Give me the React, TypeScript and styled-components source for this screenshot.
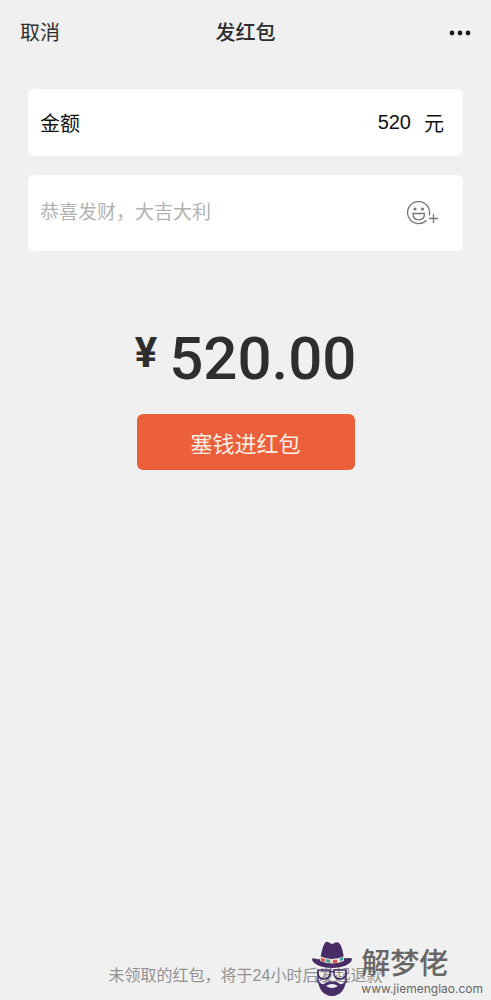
import React, { useState } from "react";
import styled, { createGlobalStyle } from "styled-components";

const GlobalStyle = createGlobalStyle`
  * { box-sizing: border-box; }
  body {
    margin: 0;
    background: #f0f0f0;
    color: #2e2e2e;
    font-family: "Liberation Sans", "Noto Sans CJK SC", sans-serif;
  }
  button, input { font-family: inherit; }
`;

const Page = styled.div`
  position: relative;
  display: flex;
  flex-direction: column;
  min-height: 100vh;
`;

const Header = styled.header`
  display: grid;
  grid-template-columns: 1fr auto 1fr;
  align-items: center;
  height: 65px;
  padding: 0 20px;
`;

const Title = styled.h1`
  margin: 0;
  font-size: 20px;
  line-height: 30px;
  font-weight: 500;
`;

const PlainButton = styled.button<{ $end?: boolean }>`
  display: flex;
  justify-self: ${(p) => (p.$end ? "end" : "start")};
  padding: 0;
  border: 0;
  background: none;
  color: inherit;
  font-size: 20px;
  line-height: 30px;
  cursor: pointer;
`;

const Form = styled.form`
  display: flex;
  flex-direction: column;
  padding: 24px 28px 0;
`;

const Field = styled.div<{ $tall?: boolean }>`
  display: flex;
  align-items: center;
  height: ${(p) => (p.$tall ? 76 : 67)}px;
  margin-bottom: 19px;
  padding: 0 ${(p) => (p.$tall ? 24 : 19)}px 0 12px;
  border-radius: 6px;
  background: #fff;
  color: #111;
  font-size: 20px;
`;

const TextInput = styled.input<{ $amount?: boolean }>`
  flex: 1;
  min-width: 0;
  height: 40px;
  padding: 0;
  border: 0;
  outline: 0;
  background: none;
  color: inherit;
  font-size: ${(p) => (p.$amount ? 20 : 19)}px;
  text-align: ${(p) => (p.$amount ? "right" : "left")};
  margin-right: ${(p) => (p.$amount ? 13 : 0)}px;
  &::placeholder { color: #b2b2b2; opacity: 1; }
`;

const Total = styled.output`
  display: flex;
  justify-content: center;
  align-items: flex-start;
  gap: 12px;
  margin-top: 54px;
  font-family: Roboto, sans-serif;
  font-weight: 500;
  font-size: 60px;
  line-height: 70px;
`;

const Currency = styled.span`
  font-size: 42px;
  line-height: 58px;
  font-weight: 700;
`;

const Submit = styled.button`
  align-self: center;
  width: 218px;
  height: 56px;
  margin-top: 20px;
  padding: 0;
  border: 0;
  border-radius: 6px;
  background: #eb5f3b;
  color: #fdeee6;
  font-size: 22px;
  cursor: pointer;
`;

const Footer = styled.footer`
  margin-top: auto;
  padding-bottom: 12px;
  color: #929292;
  font-size: 16px;
  line-height: 24px;
  text-align: center;
`;

const Watermark = styled.div`
  position: absolute;
  right: 8px;
  bottom: 3px;
  display: flex;
  align-items: flex-end;
  gap: 8px;
  color: #666;
  pointer-events: none;
`;

const Brand = styled.div`
  display: flex;
  flex-direction: column;
`;

const BrandName = styled.span`
  font-size: 29px;
  line-height: 34px;
  font-weight: 500;
`;

const BrandUrl = styled.span`
  font-family: Inter, sans-serif;
  font-size: 12px;
  line-height: 16px;
`;

const MoreIcon = () => (
  <svg width="22" height="6" viewBox="0 0 22 6" fill="#1c1c1c" aria-hidden="true">
    <circle cx="3" cy="3" r="2.4" />
    <circle cx="11" cy="3" r="2.4" />
    <circle cx="19" cy="3" r="2.4" />
  </svg>
);

const EmojiIcon = () => (
  <svg width="32" height="26" viewBox="0 0 32 26" fill="none" stroke="#777" strokeWidth="1.3" aria-hidden="true">
    <path d="M22.2 15.5A11 11 0 1 0 19.5 20.2" />
    <path d="M6 13.5h11.500c0 4-2.500 6.300-5.800 6.300S6 17.500 6 13.500z" />
    <circle cx="8" cy="9" r="1.600" fill="#777" stroke="none" />
    <circle cx="15.500" cy="9" r="1.600" fill="#777" stroke="none" />
    <path d="M26.500 14v9M22 18.500h9" />
  </svg>
);

const HatLogo = () => (
  <svg width="42" height="56" viewBox="0 0 42 56" aria-hidden="true">
    <path d="M9 18C11 10 12 3 15 1c2-1 4 2 6 2s4-3 7-1c3 3 4 9 5 15 3 1 7-1 8 1 0 5-10 9-20 9S1 23 1 18c1-2 5 1 8 0z" fill="#472c66" />
    <path d="M9 15q12 6 24 0v5q-12 5-24 0z" fill="#e8d9cf" />
    <path d="M10 17l4 1v3l-4-1zM22 19h4v3h-4z" fill="#d9534f" />
    <path d="M15 18l4 1v3l-4-1zM29 17l3-1v3l-3 1z" fill="#3aa6a0" />
    <g fill="none" stroke="#472c66" strokeWidth="1.500">
      <path d="M7 29h12v4q-1 5-6 5t-6-5zM23 29h12v4q-1 5-6 5t-6-5zM19 31q2-1 4 0" />
      <path d="M7 30v12M35 30v12" />
    </g>
    <path d="M7 38q2 6 6 5 5-4 8-2 3-2 8 2 4 1 6-5c0 9-5 17-14 17S7 47 7 38z" fill="#472c66" />
    <path d="M15 45q6-4 12 0-6 4-12 0z" fill="#f0f0f0" />
  </svg>
);

export default function App() {
  const [amount, setAmount] = useState("520");
  const [message, setMessage] = useState("");
  return (
    <>
      <GlobalStyle />
      <Page>
        <Header>
          <PlainButton type="button">取消</PlainButton>
          <Title>发红包</Title>
          <PlainButton type="button" $end aria-label="更多">
            <MoreIcon />
          </PlainButton>
        </Header>
        <Form onSubmit={(e) => e.preventDefault()}>
          <Field>
            <label htmlFor="amount">金额</label>
            <TextInput
              id="amount"
              $amount
              inputMode="decimal"
              value={amount}
              onChange={(e) => setAmount(e.target.value)}
            />
            <span>元</span>
          </Field>
          <Field $tall>
            <TextInput
              aria-label="祝福语"
              placeholder="恭喜发财，大吉大利"
              value={message}
              onChange={(e) => setMessage(e.target.value)}
            />
            <PlainButton type="button" aria-label="添加表情">
              <EmojiIcon />
            </PlainButton>
          </Field>
          <Total htmlFor="amount">
            <Currency>¥</Currency>
            <span>{(Number(amount) || 0).toFixed(2)}</span>
          </Total>
          <Submit type="submit">塞钱进红包</Submit>
        </Form>
        <Footer>未领取的红包，将于24小时后发起退款</Footer>
        <Watermark>
          <HatLogo />
          <Brand>
            <BrandName>解梦佬</BrandName>
            <BrandUrl>www.jiemenglao.com</BrandUrl>
          </Brand>
        </Watermark>
      </Page>
    </>
  );
}
